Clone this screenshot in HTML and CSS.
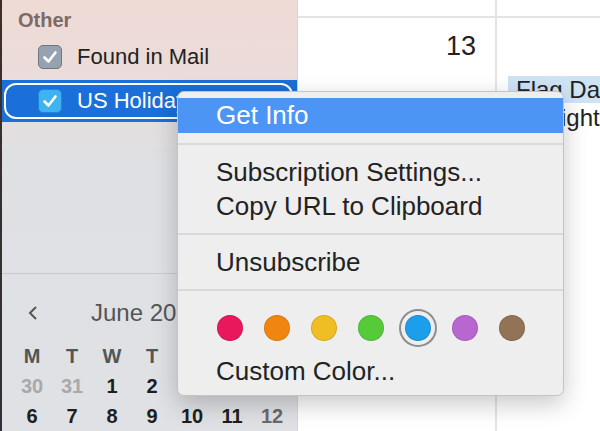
FILE: index.html
```html
<!DOCTYPE html>
<html lang="en">
<head>
    <meta charset="UTF-8">
    <meta name="viewport" content="width=device-width, initial-scale=1.0">
    <title>Calendar</title>
    <link rel="stylesheet" href="styles.css">
</head>
<body>
    <div class="window">
        <div class="edge"></div>

        <div class="sidebar">
            <div class="lists">
                <div class="group-title">Other</div>
                <div class="cal-row">
                    <span class="check check-gray">
                        <svg width="24" height="24" viewBox="0 0 24 24"><path d="M6.5 12.5 L10.5 16.5 L17.5 7.5" fill="none" stroke="#fff" stroke-width="2.6" stroke-linecap="round" stroke-linejoin="round"/></svg>
                    </span>
                    <span class="cal-name">Found in Mail</span>
                </div>
                <div class="cal-row selected">
                    <div class="selected-inner">
                        <span class="check check-blue">
                            <svg width="24" height="24" viewBox="0 0 24 24"><path d="M6.5 12.5 L10.5 16.5 L17.5 7.5" fill="none" stroke="#fff" stroke-width="2.6" stroke-linecap="round" stroke-linejoin="round"/></svg>
                        </span>
                        <span class="cal-name">US Holidays</span>
                        <svg class="sub-icon" width="16" height="16" viewBox="0 0 16 16"><path d="M8 1 L13 9 L3 9 Z" fill="#fff"/></svg>
                    </div>
                </div>
            </div>

            <div class="mini">
                <div class="mini-head">
                    <svg class="chev" width="12" height="16" viewBox="0 0 12 16"><polyline points="9,2 3,8 9,14" fill="none" stroke="#555" stroke-width="2"/></svg>
                    <span class="month">June 2016</span>
                </div>
                <div class="mini-grid">
                    <span class="dow">M</span><span class="dow">T</span><span class="dow">W</span><span class="dow">T</span><span class="dow">F</span><span class="dow">S</span><span class="dow">S</span>
                    <span class="day dim">30</span><span class="day dim">31</span><span class="day">1</span><span class="day">2</span><span class="day">3</span><span class="day">4</span><span class="day weekend">5</span>
                    <span class="day">6</span><span class="day">7</span><span class="day">8</span><span class="day">9</span><span class="day">10</span><span class="day">11</span><span class="day weekend">12</span>
                </div>
            </div>
        </div>

        <div class="calendar">
            <div class="cell top"></div>
            <div class="cell top right"></div>
            <div class="cell">
                <div class="date">13</div>
            </div>
            <div class="cell right">
                <div class="event">Flag Day</div>
                <div class="event-plain">Flight to Boston</div>
            </div>
        </div>

        <div class="menu">
            <div class="item active">Get Info</div>
            <div class="sep"></div>
            <div class="item">Subscription Settings...</div>
            <div class="item">Copy URL to Clipboard</div>
            <div class="sep"></div>
            <div class="item">Unsubscribe</div>
            <div class="sep"></div>
            <div class="colors">
                <span class="dot red"></span>
                <span class="dot orange"></span>
                <span class="dot yellow"></span>
                <span class="dot green"></span>
                <span class="dot blue picked"></span>
                <span class="dot purple"></span>
                <span class="dot brown"></span>
            </div>
            <div class="item">Custom Color...</div>
        </div>
    </div>
</body>
</html>
```

FILE: styles.css
```css
body {
    margin: 0;
    font-family: 'Liberation Sans', Arial, sans-serif;
    color: #222;
    background: #fff;
}

.window {
    position: relative;
    display: flex;
    width: 600px;
    height: 431px;
    overflow: hidden;
}

.edge {
    flex: none;
    width: 2px;
    background: linear-gradient(to bottom, #3d2e2a, #2f3238);
}

/* sidebar */
.sidebar {
    flex: none;
    width: 295px;
    display: flex;
    flex-direction: column;
    border-right: 1px solid #d6d6d6;
    background: linear-gradient(to bottom, #efdad5 0, #ebdcd9 70px, #dee0e4 160px, #dfe1e4 100%);
}

.lists {
    height: 273px;
    border-bottom: 1px solid #c9cacd;
}

.group-title {
    height: 40px;
    line-height: 40px;
    padding-left: 16px;
    font-size: 20px;
    font-weight: bold;
    color: #7b6b67;
}

.cal-row {
    display: flex;
    align-items: center;
    height: 34px;
    padding-left: 36px;
    font-size: 22px;
}

.cal-name {
    margin-left: 15px;
    white-space: nowrap;
}

.check {
    flex: none;
    width: 24px;
    height: 24px;
    border-radius: 5px;
    box-sizing: border-box;
}

.check svg {
    display: block;
    margin: -1px;
}

.check-gray {
    background: #97a2b1;
    border: 1px solid #6c7786;
}

.check-blue {
    background: #3fb2f2;
    border: 1px solid #1e86d4;
}

.cal-row.selected {
    margin-top: 6px;
    height: 42px;
    padding: 3px 4px 3px 2px;
    box-sizing: border-box;
    background: #1b6fd8;
    color: #fff;
}

.selected-inner {
    display: flex;
    align-items: center;
    flex: 1;
    height: 100%;
    padding-left: 32px;
    border: 2px solid #fff;
    border-radius: 12px;
    box-sizing: border-box;
}

.sub-icon {
    margin-left: auto;
    margin-right: 30px;
}

/* mini month */
.mini-head {
    display: flex;
    align-items: center;
    height: 36px;
    margin-top: 21px;
    padding-left: 25px;
}

.month {
    margin-left: 52px;
    font-size: 24px;
    color: #555;
    white-space: nowrap;
}

.mini-grid {
    display: grid;
    grid-template-columns: repeat(7, 40px);
    grid-auto-rows: 30px;
    margin-top: 10px;
    padding-left: 10px;
    text-align: center;
    line-height: 30px;
    font-size: 20px;
    font-weight: bold;
}

.dow {
    color: #555;
}

.day {
    color: #1e1e1e;
}

.day.dim {
    color: #a9a9a9;
}

.day.weekend {
    color: #6a6a6a;
}

/* calendar */
.calendar {
    flex: 1;
    min-width: 0;
    display: grid;
    grid-template-columns: 199px minmax(0, 1fr);
    grid-template-rows: 18px 1fr;
    overflow: hidden;
}

.cell {
    min-width: 0;
    border-right: 2px solid #e4e4e4;
}

.cell.right {
    border-right: none;
}

.cell.top {
    border-bottom: 2px solid #e4e4e4;
}

.date {
    padding: 11px 19px 0 0;
    text-align: right;
    font-size: 27px;
    line-height: 34px;
    color: #222;
}

.event {
    margin: 58px 0 0 11px;
    padding-left: 8px;
    height: 27px;
    line-height: 27px;
    font-size: 24px;
    background: #cfe3f6;
    white-space: nowrap;
    overflow: hidden;
}

.event-plain {
    padding-left: 44px;
    font-size: 24px;
    line-height: 30px;
    white-space: nowrap;
    overflow: hidden;
}

/* context menu */
.menu {
    position: absolute;
    left: 177px;
    top: 91px;
    width: 387px;
    padding: 6px 0 7px;
    box-sizing: border-box;
    background: #eeeeee;
    border: 1px solid #c4c4c4;
    border-radius: 7px;
    box-shadow: 0 8px 24px rgba(0, 0, 0, 0.22);
}

.item {
    height: 34px;
    line-height: 34px;
    padding-left: 38px;
    font-size: 26px;
    color: #222;
}

.item.active {
    height: 35px;
    line-height: 35px;
    background: #4d95f5;
    color: #fff;
}

.sep {
    height: 2px;
    margin: 10px 0;
    background: #d9d9d9;
}

.colors {
    display: flex;
    align-items: center;
    gap: 21px;
    height: 53px;
    padding-left: 39px;
}

.dot {
    width: 26px;
    height: 26px;
    border-radius: 50%;
    box-sizing: border-box;
    border: 1px solid rgba(0, 0, 0, 0.1);
}

.dot.picked {
    box-shadow: 0 0 0 4px #eeeeee, 0 0 0 6px #8d8d8d;
}

.red { background: #e9185d; }
.orange { background: #f0860f; }
.yellow { background: #f1bd24; }
.green { background: #57ca3a; }
.blue { background: #1c9eea; }
.purple { background: #b866d0; }
.brown { background: #927356; }
```
